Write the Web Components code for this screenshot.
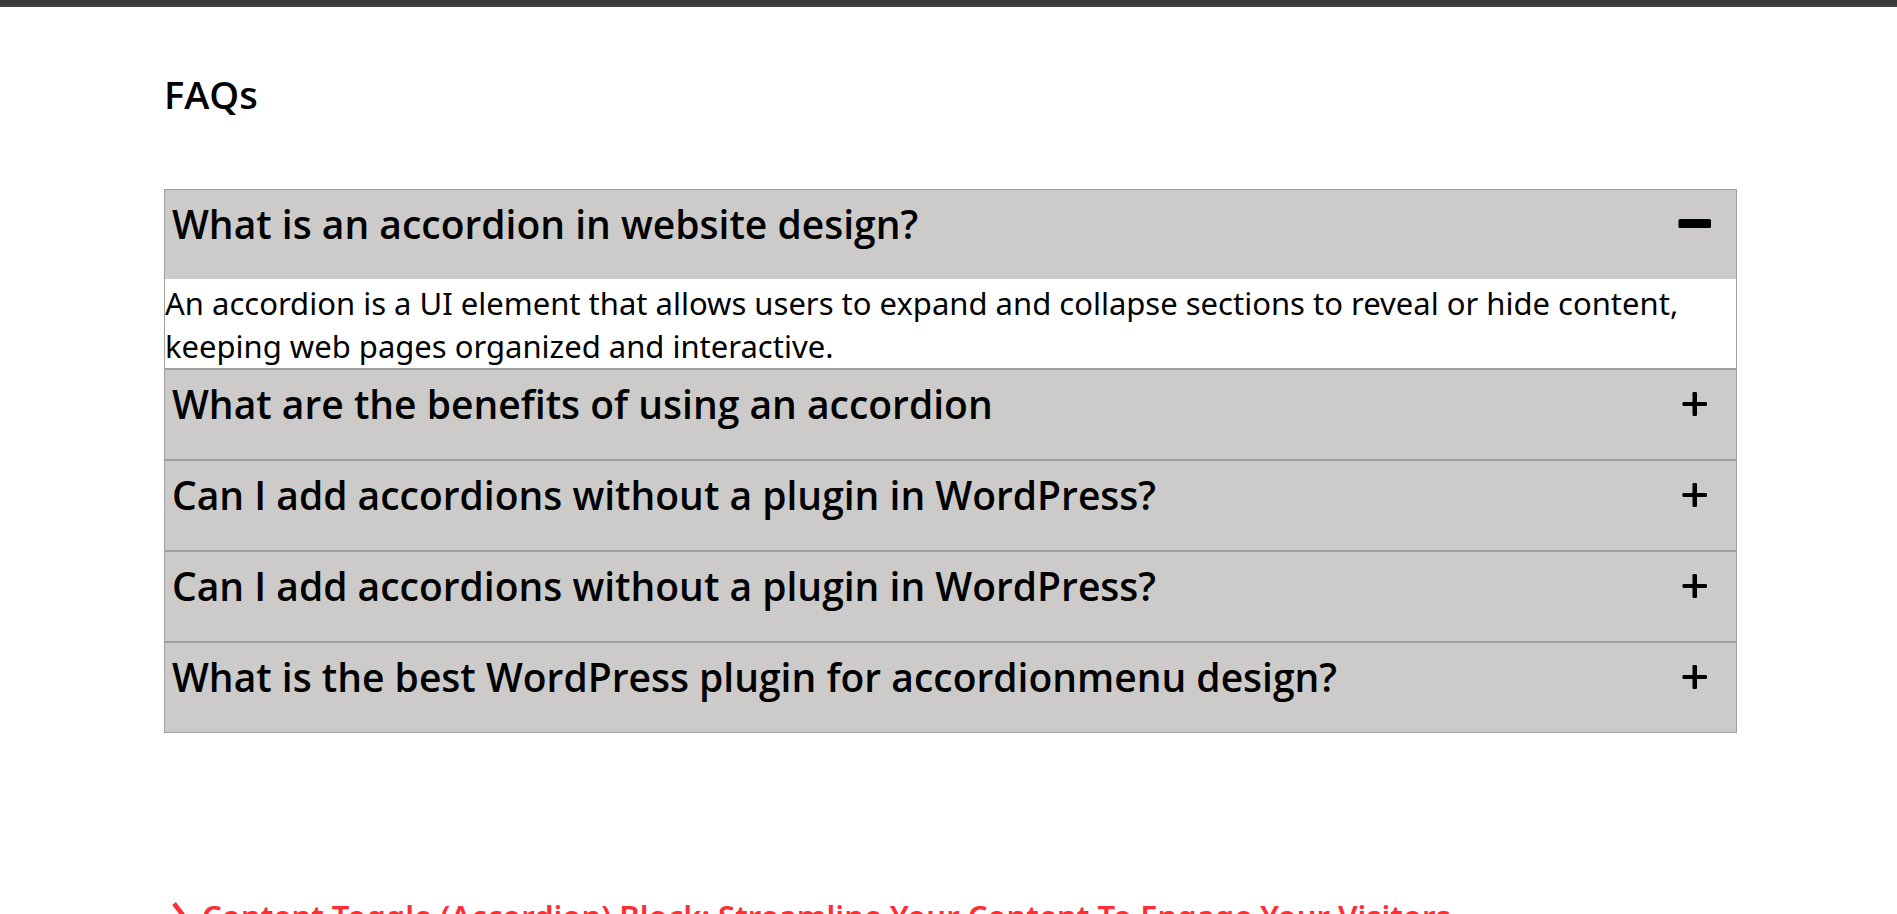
<!DOCTYPE html>
<html lang="en">
<head>
<meta charset="utf-8">
<title>FAQs</title>
<style>
  body { margin: 0; background: #fff; color: #000; font-family: "Open Sans", "Noto Sans", sans-serif; }
</style>
</head>
<body>
<faq-page>
  <span slot="title">FAQs</span>
  <faq-item open>
    <span slot="question">What is an accordion in website design?</span>
    An accordion is a UI element that allows users to expand and collapse sections to reveal or hide content, keeping web pages organized and interactive.
  </faq-item>
  <faq-item><span slot="question">What are the benefits of using an accordion</span></faq-item>
  <faq-item><span slot="question">Can I add accordions without a plugin in WordPress?</span></faq-item>
  <faq-item><span slot="question">Can I add accordions without a plugin in WordPress?</span></faq-item>
  <faq-item><span slot="question">What is the best WordPress plugin for accordionmenu design?</span></faq-item>
  <related-link slot="related">Content Toggle (Accordion) Block: Streamline Your Content To Engage Your Visitors</related-link>
</faq-page>

<template id="page-template">
  <style>
    :host { display: block; height: 100vh; overflow: auto; scrollbar-width: none; }
    .bar { height: 5px; background: #3b3a3a; border-bottom: 2px solid #444242; }
    main { padding: 61px 160px 0 164px; }
    h1 { margin: 0 0 69px; font-size: 38px; line-height: 52px; font-weight: 600; }
    footer { margin-top: 162px; }
  </style>
  <div class="bar"></div>
  <main>
    <h1><slot name="title"></slot></h1>
    <section><slot></slot></section>
    <footer><slot name="related"></slot></footer>
  </main>
</template>

<template id="item-template">
  <style>
    :host { display: block; border: 1px solid #a09f9e; }
    h2 { margin: 0; }
    button {
      display: flex; align-items: center; justify-content: space-between;
      box-sizing: border-box; width: 100%; margin: 0; padding: 7px 24px 29px 7px;
      border: 0; background: #cccbc9; color: inherit; text-align: left; cursor: pointer;
      font-family: inherit; font-size: 39px; line-height: 53px; font-weight: 600;
    }
    svg { flex: none; width: 34px; height: 34px; }
    .minus { display: none; }
    .answer { display: none; padding-top: 3px; font-family: "Noto Sans", "Open Sans", sans-serif; font-size: 31px; line-height: 43px; }
    :host([open]) .answer { display: block; }
    :host([open]) .minus { display: inline; }
    :host([open]) .plus { display: none; }
  </style>
  <h2>
    <button type="button" aria-controls="answer">
      <slot name="question"></slot>
      <svg viewBox="0 0 34 34" aria-hidden="true">
        <rect class="minus" x="0.5" y="12" width="32.5" height="9" rx="1.5"/>
        <g class="plus">
          <rect x="4.5" y="15" width="24.5" height="4" rx="1.2"/>
          <rect x="14.5" y="5" width="4.5" height="24" rx="1.2"/>
        </g>
      </svg>
    </button>
  </h2>
  <div class="answer" id="answer"><slot></slot></div>
</template>

<template id="link-template">
  <style>
    :host { display: block; }
    a {
      display: flex; align-items: center; gap: 16px; padding-left: 7px;
      color: #ff2d36; text-decoration: none; font-family: "Noto Sans", "Open Sans", sans-serif;
      font-size: 31px; line-height: 42px; font-weight: 600;
    }
    svg { flex: none; width: 15px; height: 28px; }
  </style>
  <a href="#">
    <svg viewBox="0 0 15 28" aria-hidden="true"><path d="M3 1.5L11.5 12.5L3 23.5" fill="none" stroke="currentColor" stroke-width="4.6"/></svg>
    <span><slot></slot></span>
  </a>
</template>

<script>
  const mount = (host, id) => {
    const root = host.attachShadow({ mode: "open" });
    root.append(document.getElementById(id).content.cloneNode(true));
    return root;
  };

  customElements.define("faq-page", class extends HTMLElement {
    constructor() { super(); mount(this, "page-template"); }
  });

  customElements.define("faq-item", class extends HTMLElement {
    constructor() {
      super();
      this.button = mount(this, "item-template").querySelector("button");
      this.button.addEventListener("click", () => this.toggleAttribute("open"));
    }
    static get observedAttributes() { return ["open"]; }
    connectedCallback() { this.sync(); }
    attributeChangedCallback() { this.sync(); }
    sync() { this.button.setAttribute("aria-expanded", this.hasAttribute("open")); }
  });

  customElements.define("related-link", class extends HTMLElement {
    constructor() { super(); mount(this, "link-template"); }
  });
</script>
</body>
</html>
